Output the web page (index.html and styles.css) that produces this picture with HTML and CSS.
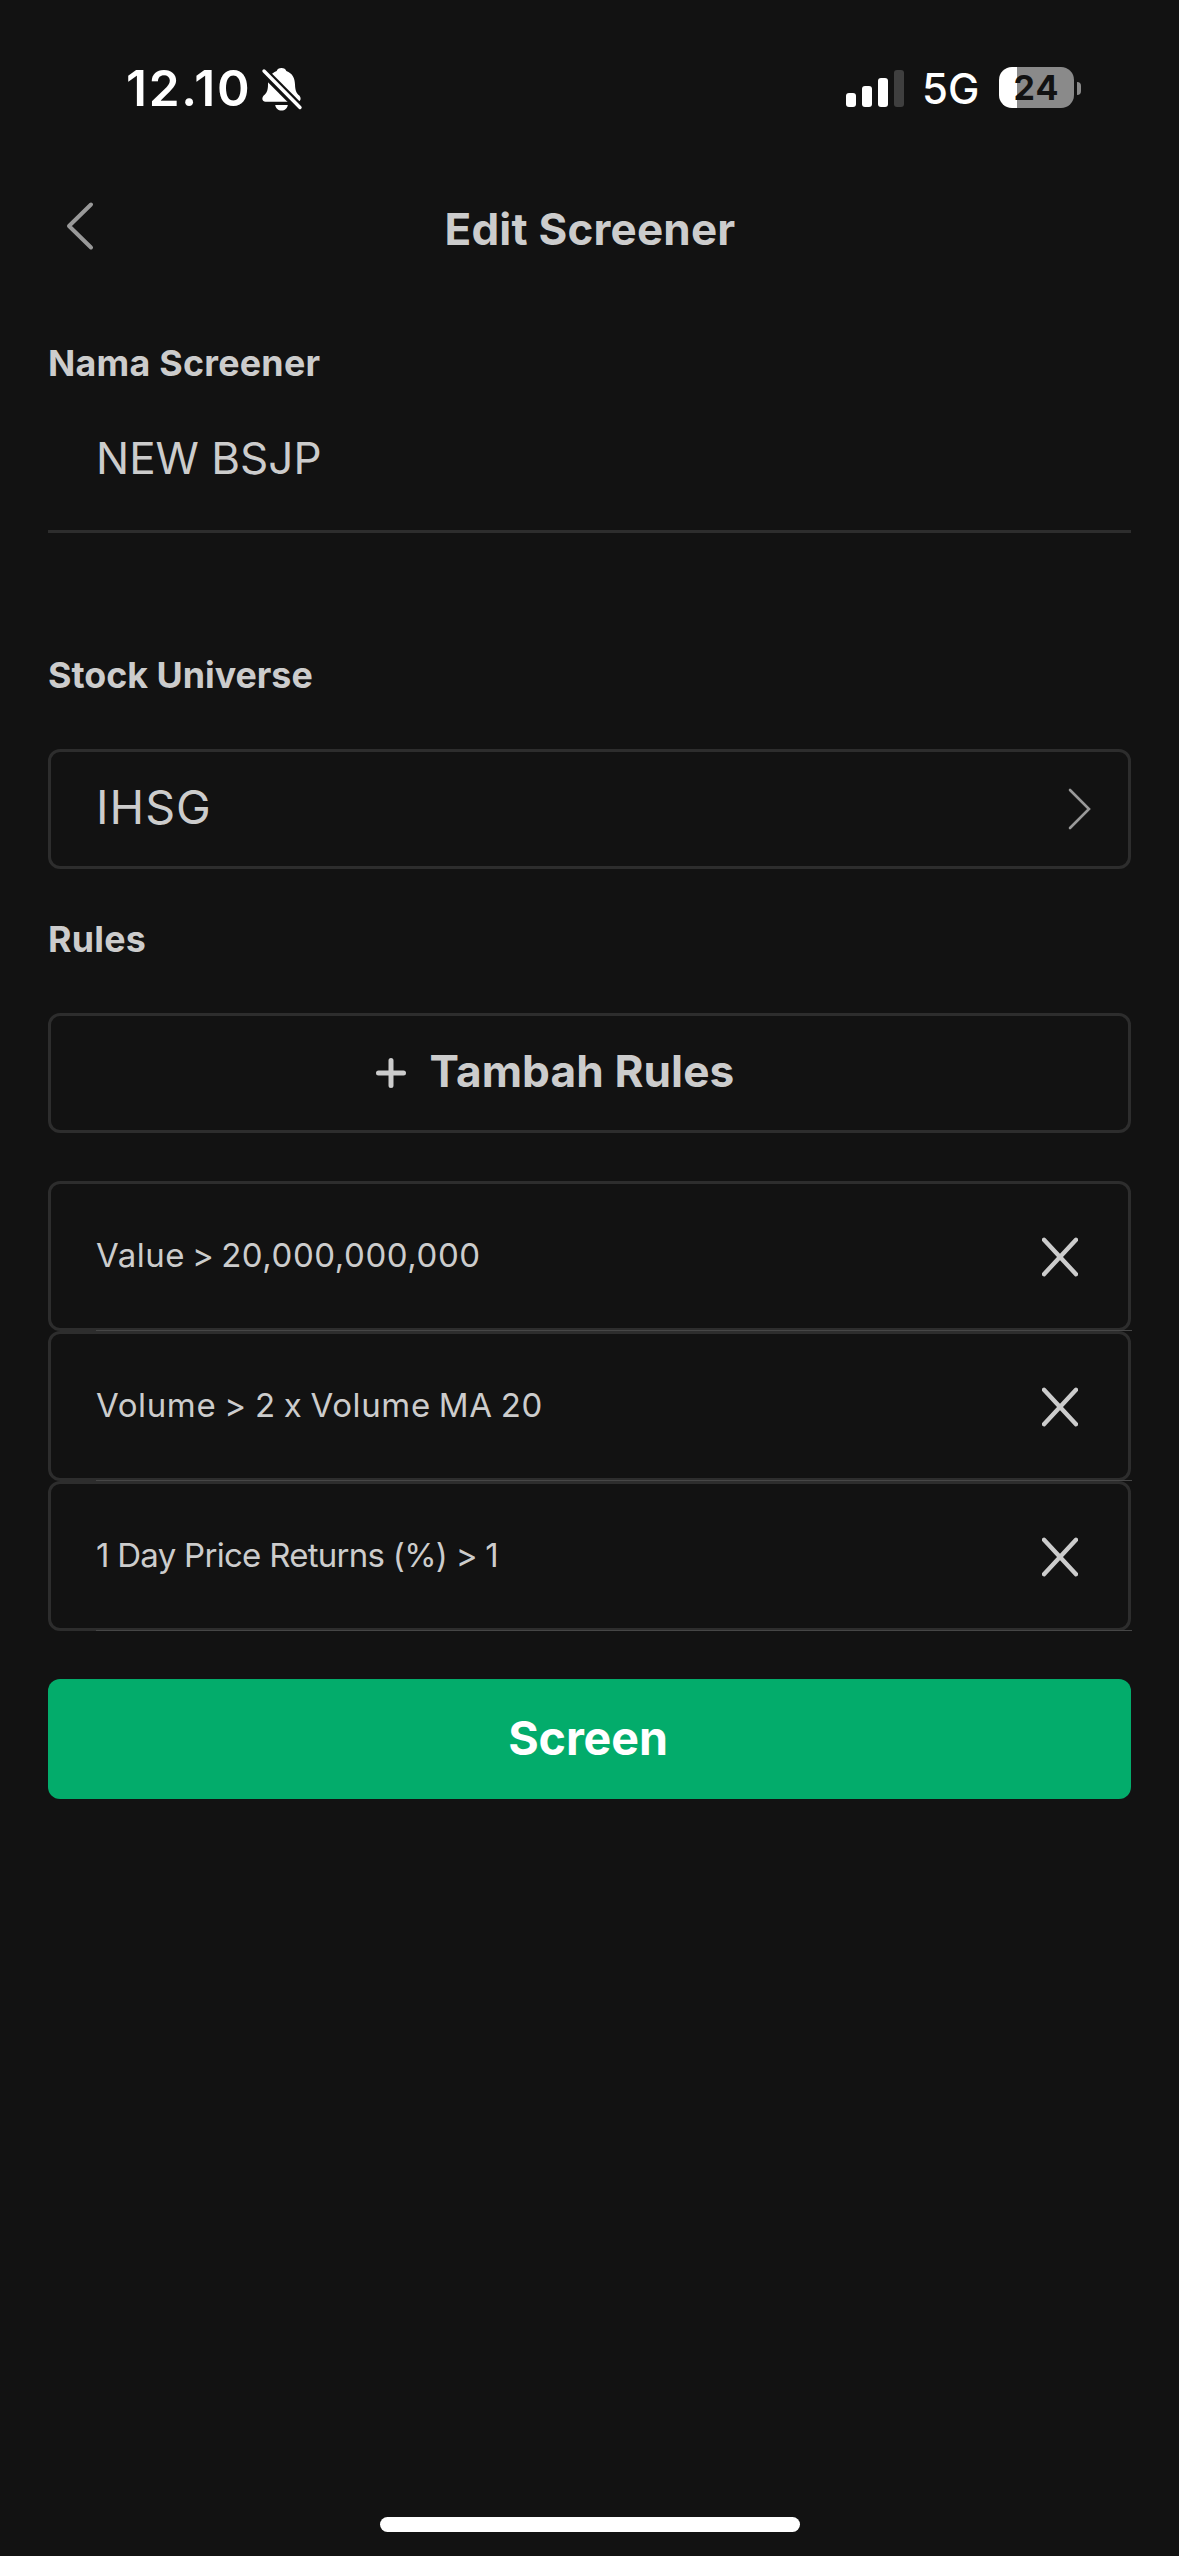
FILE: index.html
```html
<!DOCTYPE html>
<html lang="id">
<head>
<meta charset="utf-8">
<meta name="viewport" content="width=device-width, initial-scale=1">
<title>Edit Screener</title>
<link rel="stylesheet" href="styles.css">
</head>
<body>
<div class="screen">
  <div class="status">
    <div class="status-left">
      <span class="clock">12.10</span>
      <svg class="bell" width="42" height="46" viewBox="0 0 42 46">
        <path d="M20.5 2C23 2 24.8 3.200 25.300 5C31.500 7.300 33.800 12 34 18.500C34.200 25 35.500 27 38.300 29.600C40.500 31.800 40 35.800 36.500 35.800H4.500C1 35.800 .500 31.800 2.700 29.600C5.500 27 7 25 7 18.500C7 12 9.500 7.300 15.700 5C16.200 3.200 18 2 20.500 2Z" fill="#fff"/>
        <path d="M14.200 39H26.800C26.300 42.500 23.800 44.500 20.500 44.500S14.700 42.500 14.200 39Z" fill="#fff"/>
        <path d="M2.500 5.500L39 42" stroke="#121212" stroke-width="9"/>
        <path d="M3 5L39 41.500" stroke="#fff" stroke-width="3.400" stroke-linecap="round"/>
      </svg>
    </div>
    <div class="status-right">
      <div class="signal"><i class="bar bar-1"></i><i class="bar bar-2"></i><i class="bar bar-3"></i><i class="bar bar-4"></i></div>
      <span class="network">5G</span>
      <div class="battery"><span class="battery-level">24</span></div>
      <i class="battery-tip"></i>
    </div>
  </div>

  <header class="header">
    <button class="back" aria-label="Kembali">
      <svg width="30" height="50" viewBox="0 0 30 50" fill="none" stroke="#999" stroke-width="4" stroke-linecap="round" stroke-linejoin="round"><path d="M26 3.500L4 25L26 46.500"/></svg>
    </button>
    <h1 class="title">Edit Screener</h1>
  </header>

  <main class="form">
    <h2 class="label label-name">Nama Screener</h2>
    <div class="name-field">NEW BSJP</div>

    <h2 class="label label-universe">Stock Universe</h2>
    <div class="box select">
      <span class="select-value">IHSG</span>
      <svg width="26" height="44" viewBox="0 0 26 44" fill="none" stroke="#999" stroke-width="2.600" stroke-linecap="round"><path d="M3 3L22 22L3 41"/></svg>
    </div>

    <h2 class="label label-rules">Rules</h2>
    <button class="box add">
      <svg width="30" height="30" viewBox="0 0 30 30" stroke="#ccc" stroke-width="5" stroke-linecap="round"><path d="M15 2.500V27.500M2.500 15H27.500"/></svg>
      <span class="add-text">Tambah Rules</span>
    </button>

    <ul class="rules">
      <li class="rule"><span class="rule-value">Value &gt; 20,000,000,000</span>
        <svg class="remove" viewBox="0 0 36 40"><path d="M2 2.800L34 37.200M34 2.800L2 37.200"/></svg></li>
      <li class="rule"><span class="rule-volume">Volume &gt; 2 x Volume MA 20</span>
        <svg class="remove" viewBox="0 0 36 40"><path d="M2 2.800L34 37.200M34 2.800L2 37.200"/></svg></li>
      <li class="rule"><span class="rule-returns">1 Day Price Returns (%) &gt; 1</span>
        <svg class="remove" viewBox="0 0 36 40"><path d="M2 2.800L34 37.200M34 2.800L2 37.200"/></svg></li>
    </ul>

    <button class="submit">Screen</button>
  </main>

  <div class="home-indicator"></div>
</div>
</body>
</html>
```
FILE: styles.css
```css
* { box-sizing: border-box; margin: 0; padding: 0; }
body { background: #121212; }
button { font: inherit; color: inherit; background: none; border: 0; }
svg { display: block; flex: none; }

.screen {
  width: 1179px;
  height: 2556px;
  display: flex;
  flex-direction: column;
  background: #121212;
  color: #ccc;
  font-family: Inter, "Liberation Sans", sans-serif;
  overflow: hidden;
}

/* Status bar */
.status {
  height: 176px;
  display: flex;
  justify-content: space-between;
  align-items: center;
  padding: 0 98px 0 126px;
  color: #fff;
}
.status-left { display: flex; align-items: center; height: 100%; }
.clock { width: 135px; font-size: 49.5px; font-weight: 600; letter-spacing: 1.700px; line-height: 60px; }
.bell { margin-top: 1px; }
.status-right { display: flex; align-items: center; }
.signal { display: flex; align-items: flex-end; gap: 6px; height: 37px; margin-right: 18px; }
.bar { width: 10px; border-radius: 3px; background: #fff; }
.bar-1 { height: 14px; }
.bar-2 { height: 21px; }
.bar-3 { height: 29px; }
.bar-4 { height: 37px; background: #3f3f3f; }
.network { width: 77px; font-size: 42px; font-weight: 500; line-height: 50px; padding-top: 2px; }
.battery {
  width: 75px;
  height: 41px;
  margin-top: -1px;
  border-radius: 13px;
  background: linear-gradient(to right, #fff 18px, #8a8a8a 18px);
  text-align: center;
}
.battery-level { display: block; font-size: 34px; font-weight: 700; letter-spacing: 1px; line-height: 41px; color: #121212; }
.battery-tip { width: 4px; height: 13px; margin-left: 3px; border-radius: 0 4px 4px 0; background: #8a8a8a; }

/* Header */
.header {
  height: 106px;
  display: grid;
  grid-template-columns: 130px 1fr 130px;
  align-items: center;
}
.back { padding-left: 65px; margin-top: -6px; }
.title { font-size: 44px; font-weight: 700; line-height: 54px; letter-spacing: .2px; text-align: center; padding-left: 1px; }

/* Form */
.form { flex: 1; display: flex; flex-direction: column; padding: 0 48px; }
.label { font-size: 35.800px; font-weight: 700; line-height: 44px; letter-spacing: .25px; }
.label-name { margin-top: 59px; }
.name-field {
  height: 148px;
  padding: 47px 48px 0;
  border-bottom: 3px solid #2d2d2d;
  font-size: 44px;
  line-height: 52px;
}
.label-universe { margin-top: 120px; letter-spacing: 0; }
.box {
  height: 120px;
  flex: none;
  display: flex;
  align-items: center;
  border: 3px solid #2d2d2d;
  border-radius: 12px;
}
.select { margin-top: 52px; padding: 0 35px 0 45px; justify-content: space-between; }
.select-value { font-size: 46.6px; line-height: 56px; letter-spacing: 1px; margin-top: -4px; }
.label-rules { margin-top: 48px; }
.add { margin-top: 52px; padding-right: 69px; justify-content: center; gap: 24px; }
.add-text { font-size: 44.2px; font-weight: 700; line-height: 54px; letter-spacing: .1px; margin-top: -5px; }

.rules { list-style: none; margin-top: 48px; }
.rule {
  position: relative;
  height: 150px;
  display: flex;
  align-items: center;
  justify-content: space-between;
  padding: 0 50px 0 45px;
  border: 3px solid #2d2d2d;
  border-radius: 12px;
  font-size: 33px;
  line-height: 40px;
}
.rule span { margin-top: -2px; }
/* hairline separator, inset to the text and running to the outer edge */
.rule::after {
  content: "";
  position: absolute;
  left: 45px;
  right: -4px;
  bottom: -3px;
  height: 1px;
  background: #464646;
}
.rule-value { letter-spacing: .55px; word-spacing: -3px; }
.rule-volume { letter-spacing: .62px; word-spacing: -1.800px; }
.rule-returns { letter-spacing: -.72px; }
.remove { width: 36px; height: 40px; margin-top: 1px; fill: none; stroke: #ccc; stroke-width: 4.400; stroke-linecap: round; }

.submit {
  height: 120px;
  margin-top: 48px;
  padding: 0 3px 3px 0;
  border-radius: 12px;
  background: #03ac6b;
  color: #fff;
  font-size: 46.6px;
  font-weight: 700;
  letter-spacing: -.1px;
}

.home-indicator { width: 420px; height: 15px; margin: 0 auto 24px; border-radius: 8px; background: #fff; }
```
